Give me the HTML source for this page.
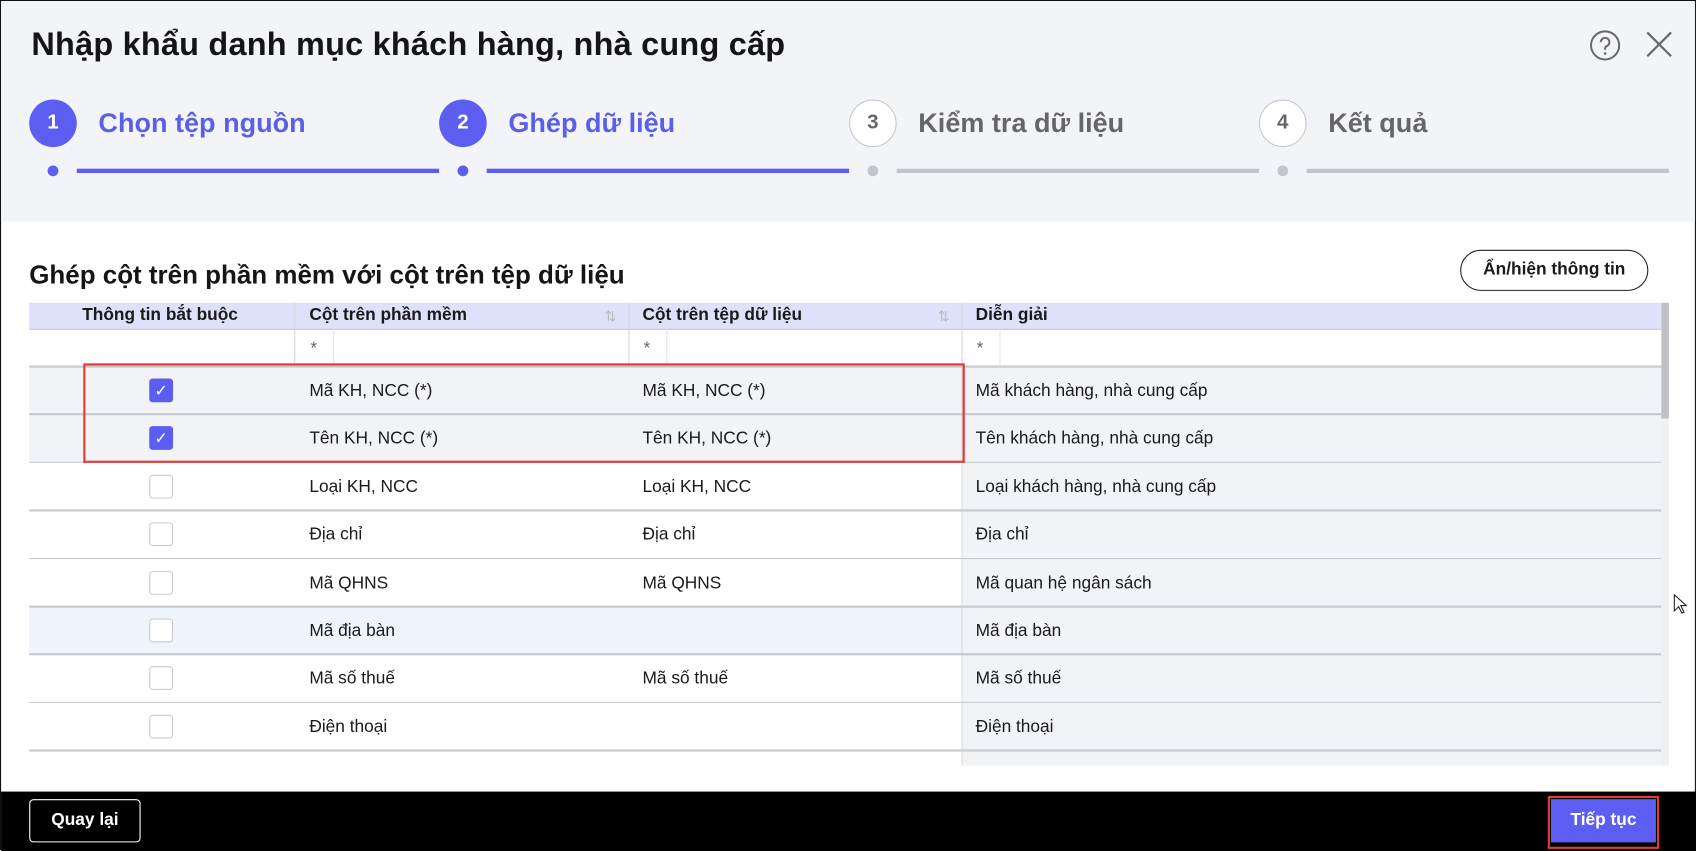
<!DOCTYPE html>
<html><head><meta charset="utf-8"><style>
*{box-sizing:border-box;margin:0;padding:0}
html,body{width:1696px;height:850px;overflow:hidden;background:#fff}
#w{position:absolute;left:0;top:0;width:1568px;height:786px;transform:scale(1.0816,1.0814);transform-origin:0 0;font-family:"Liberation Sans",sans-serif;color:#1a1a1a;border:1.5px solid #111;border-bottom:none}
.a{position:absolute}
.hd{left:0;top:0;width:1566px;height:204px;background:#f3f4f8}
.circ{width:44px;height:44px;border-radius:50%;display:flex;align-items:center;justify-content:center;font-weight:bold;font-size:19px}
.on{background:#5b5ef0;color:#fff}
.off{background:#fff;border:1.5px solid #c6c6cc;color:#666}
.lbl{font-size:25px;font-weight:bold;top:99px}
.dot{width:10px;height:10px;border-radius:50%;top:152px}
.ln{height:4px;top:155px}
.tb{left:26px;width:1509px}
.cell{position:absolute;font-size:16px;display:flex;align-items:center}
.cb{width:22px;height:22px;border:1.5px solid #ccc;border-radius:3px;background:#fff}
.cb.ck{background:#5b5ef0;border-color:#5b5ef0;color:#fff;font-size:15px;display:flex;align-items:center;justify-content:center}
</style></head><body><div id="w">
<div class="a hd"></div>
<div class="a" style="left:28px;top:24px;font-size:30px;font-weight:bold;color:#151515;letter-spacing:0.2px">Nhập khẩu danh mục khách hàng, nhà cung cấp</div>
<svg class="a" style="left:1468px;top:26px" width="30" height="30" viewBox="0 0 30 30"><circle cx="15" cy="15" r="13" fill="none" stroke="#666" stroke-width="1.8"/><path d="M11 12a4 4 0 1 1 5.5 3.7c-1 .5-1.5 1.2-1.5 2.3v1" fill="none" stroke="#666" stroke-width="1.8"/><circle cx="15" cy="22.5" r="1.2" fill="#666"/></svg>
<svg class="a" style="left:1520px;top:27px" width="26" height="26" viewBox="0 0 26 26"><path d="M2 2L24 24M24 2L2 24" stroke="#666" stroke-width="2"/></svg>

<div class="a circ on" style="left:26px;top:91px">1</div>
<div class="a lbl" style="left:90px;color:#5b5ee8">Chọn tệp nguồn</div>
<div class="a circ on" style="left:405px;top:91px">2</div>
<div class="a lbl" style="left:469px;color:#5b5ee8">Ghép dữ liệu</div>
<div class="a circ off" style="left:784px;top:91px">3</div>
<div class="a lbl" style="left:848px;color:#666">Kiểm tra dữ liệu</div>
<div class="a circ off" style="left:1163px;top:91px">4</div>
<div class="a lbl" style="left:1227px;color:#666">Kết quả</div>
<div class="a dot" style="left:43px;background:#5b5ef0"></div><div class="a ln" style="left:70px;width:335px;background:#5b5ef0"></div>
<div class="a dot" style="left:422px;background:#5b5ef0"></div><div class="a ln" style="left:449px;width:335px;background:#5b5ef0"></div>
<div class="a dot" style="left:801px;background:#c4c4cc"></div><div class="a ln" style="left:828px;width:335px;background:#c4c4cc"></div>
<div class="a dot" style="left:1180px;background:#c4c4cc"></div><div class="a ln" style="left:1207px;width:335px;background:#c4c4cc"></div>

<div class="a" style="left:26px;top:240px;font-size:24px;font-weight:bold;color:#151515">Ghép cột trên phần mềm với cột trên tệp dữ liệu</div>
<div class="a" style="left:1349px;top:230px;width:174px;height:38px;border:1.5px solid #222;border-radius:20px;font-size:16px;font-weight:bold;display:flex;align-items:center;justify-content:center">Ẩn/hiện thông tin</div>

<div class="a tb" style="top:279px;height:25px;background:#dfe0f9;border-bottom:1.5px solid #c8c8d0"></div>
<div class="cell" style="left:75px;top:282px;font-weight:bold;font-size:16px">Thông tin bắt buộc</div>
<div class="cell" style="left:285px;top:282px;font-weight:bold">Cột trên phần mềm</div>
<div class="cell" style="left:593px;top:282px;font-weight:bold">Cột trên tệp dữ liệu</div>
<div class="cell" style="left:901px;top:282px;font-weight:bold">Diễn giải</div>
<div class="cell" style="left:558px;top:284px;color:#bbb;font-size:13px">⇅</div>
<div class="cell" style="left:866px;top:284px;color:#bbb;font-size:13px">⇅</div>
<div class="a" style="left:271px;top:279px;width:1px;height:428px;background:#d4d4da"></div>
<div class="a" style="left:580px;top:279px;width:1px;height:428px;background:#d4d4da"></div>
<div class="a" style="left:888px;top:279px;width:1px;height:428px;background:#d4d4da"></div>
<div class="cell" style="left:286px;top:313px;color:#666">*</div>
<div class="cell" style="left:594px;top:313px;color:#666">*</div>
<div class="cell" style="left:902px;top:313px;color:#666">*</div>
<div class="a" style="left:307px;top:304px;width:1px;height:34px;background:#e6e6ea"></div>
<div class="a" style="left:615px;top:304px;width:1px;height:34px;background:#e6e6ea"></div>
<div class="a" style="left:923px;top:304px;width:1px;height:34px;background:#e6e6ea"></div>

<div id="rows"></div>
<div class="a" style="left:1535px;top:279px;width:7px;height:428px;background:#f0f0f2"></div>
<div class="a" style="left:1535px;top:279px;width:7px;height:107px;background:#c0c0c6"></div>
<div class="a" style="left:76px;top:335px;width:815px;height:92px;border:2px solid #e53935"></div>
<svg class="a" style="left:1546px;top:548px" width="14" height="20" viewBox="0 0 14 20"><path d="M1 1v15l4-4 3 6 2-1-3-6h5z" fill="#fff" stroke="#222" stroke-width="1"/></svg>

<div class="a" style="left:0;top:731px;width:1568px;height:55px;background:#000"></div>
<div class="a" style="left:26px;top:738px;width:103px;height:40px;border:1.5px solid #fff;border-radius:4px;color:#fff;font-weight:bold;font-size:16px;display:flex;align-items:center;justify-content:center">Quay lại</div>
<div class="a" style="left:1430px;top:735px;width:103px;height:49px;border:2px solid #e53935"></div>
<div class="a" style="left:1433px;top:738px;width:97px;height:40px;background:#5b5ef0;color:#fff;font-weight:bold;font-size:16px;display:flex;align-items:center;justify-content:center">Tiếp tục</div>
</div>
<script>
var R=[["Mã KH, NCC (*)","Mã KH, NCC (*)","Mã khách hàng, nhà cung cấp",1],["Tên KH, NCC (*)","Tên KH, NCC (*)","Tên khách hàng, nhà cung cấp",1],["Loại KH, NCC","Loại KH, NCC","Loại khách hàng, nhà cung cấp",0],["Địa chỉ","Địa chỉ","Địa chỉ",0],["Mã QHNS","Mã QHNS","Mã quan hệ ngân sách",0],["Mã địa bàn","","Mã địa bàn",0],["Mã số thuế","Mã số thuế","Mã số thuế",0],["Điện thoại","","Điện thoại",0],["","","",0]];
var h="",y=338;
R.forEach(function(r,i){
 var hgt=i==8?14:44.4;
 var bg1=i<2?"#f2f3f6":(i==5?"#eef3fc":"#fff");
 h+='<div class="a" style="left:26px;top:'+y+'px;width:862px;height:'+hgt+'px;background:'+bg1+'"></div>';
 h+='<div class="a" style="left:889px;top:'+y+'px;width:646px;height:'+hgt+'px;background:#f2f3f6"></div>';
 h+='<div class="a" style="left:26px;top:'+(y-1)+'px;width:1509px;height:1.5px;background:#c8c8d0"></div>';
 if(i<8){
 h+='<div class="a cb'+(r[3]?' ck':'')+'" style="left:137px;top:'+(y+11)+'px">'+(r[3]?'✓':'')+'</div>';
 h+='<div class="cell" style="left:285px;top:'+(y+1)+'px;height:44px">'+r[0]+'</div>';
 h+='<div class="cell" style="left:593px;top:'+(y+1)+'px;height:44px">'+r[1]+'</div>';
 h+='<div class="cell" style="left:901px;top:'+(y+1)+'px;height:44px">'+r[2]+'</div>';}
 y+=44.4;
});
document.getElementById("rows").outerHTML=h;
</script>
</body></html>
